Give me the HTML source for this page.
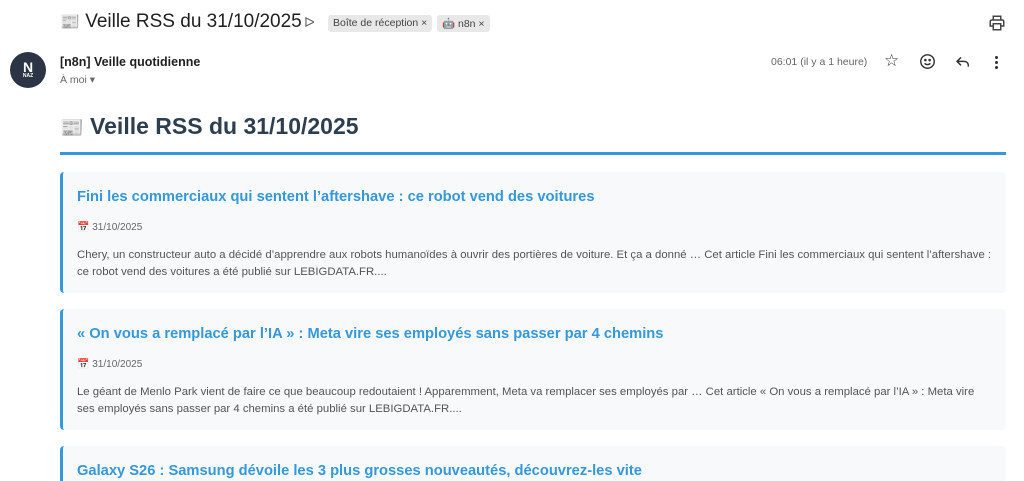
<!DOCTYPE html>
<html><head><meta charset="utf-8"><style>
*{margin:0;padding:0;box-sizing:border-box}
html,body{width:1024px;height:481px;overflow:hidden}
body{background:#fff;font-family:"Liberation Sans",Arial,sans-serif;position:relative}
.abs{position:absolute}
.subj{left:60px;top:11px;font-size:19px;color:#1f1f1f;white-space:nowrap}
.tag{top:15px;height:17px;background:#e8e8e8;border-radius:3px;font-size:10.5px;color:#444;padding:2px 5px;white-space:nowrap}
.card{position:absolute;left:60px;width:946px;height:121px;background:#f7f9fa;border-left:3px solid #3498db;border-radius:4px}
.card h2{position:absolute;left:14px;top:17px;font-size:14.7px;color:#3498db;font-weight:bold;white-space:nowrap}
.card .d{position:absolute;left:14px;top:50px;font-size:10px;color:#666}
.card p{position:absolute;left:14px;top:75px;width:930px;font-size:11.35px;color:#555;line-height:17px;white-space:nowrap}
</style></head><body>
<div class="abs subj"><span style="font-size:16px">📰</span> Veille RSS du 31/10/2025</div>
<div class="abs" style="left:304px;top:14px;font-size:14px;color:#666">ᐅ</div>
<div class="abs tag" style="left:328px">Boîte de réception ×</div>
<div class="abs tag" style="left:437px">🤖 n8n ×</div>
<svg class="abs" style="left:988px;top:14px" width="18" height="18" viewBox="0 0 24 24" fill="none" stroke="#444" stroke-width="2"><path d="M7 8V3h10v5M5 8h14a2 2 0 0 1 2 2v6h-4M7 16H3v-6a2 2 0 0 1 2-2M7 13h10v8H7z"/></svg>
<div class="abs" style="left:10px;top:52px;width:36px;height:36px;border-radius:50%;background:#2b3545;color:#fff;text-align:center;font-size:14px;font-weight:bold;line-height:30px">N<div style="font-size:5px;line-height:4px;margin-top:-8px">NAZ</div></div>
<div class="abs" style="left:60px;top:55px;font-size:12.5px;font-weight:bold;color:#1f1f1f">[n8n] Veille quotidienne</div>
<div class="abs" style="left:60px;top:74px;font-size:10.5px;color:#666">À moi ▾</div>
<div class="abs" style="left:771px;top:56px;font-size:10.5px;color:#666">06:01 (il y a 1 heure)</div>
<div class="abs" style="left:884px;top:51px;font-size:17px;color:#333">☆</div>
<svg class="abs" style="left:919px;top:53px" width="17" height="17" viewBox="0 0 24 24" fill="none" stroke="#333" stroke-width="2"><circle cx="12" cy="12" r="9.5"/><circle cx="9" cy="10" r=".8" fill="#333"/><circle cx="15" cy="10" r=".8" fill="#333"/><path d="M8 14.5c2 2.5 6 2.5 8 0"/></svg>
<svg class="abs" style="left:955px;top:54px" width="16" height="16" viewBox="0 0 24 24" fill="none" stroke="#333" stroke-width="2.2"><path d="M9 5 3 11l6 6M3 11h11a6 6 0 0 1 6 6v2"/></svg>
<div class="abs" style="left:995px;top:55px;width:3px;height:14px;background:radial-gradient(circle,#333 1.4px,transparent 1.6px) 0 0/3px 5px"></div>
<div class="abs" style="left:60px;top:113px;font-size:23px;font-weight:bold;color:#2c3e50;white-space:nowrap"><span style="font-size:19px">📰</span> Veille RSS du 31/10/2025</div>
<div class="abs" style="left:60px;top:152px;width:946px;height:3px;background:#3498db"></div>
<div class="card" style="top:172px"><h2>Fini les commerciaux qui sentent l’aftershave : ce robot vend des voitures</h2><div class="d">📅 31/10/2025</div><p>Chery, un constructeur auto a décidé d’apprendre aux robots humanoïdes à ouvrir des portières de voiture. Et ça a donné … Cet article Fini les commerciaux qui sentent l’aftershave :<br>ce robot vend des voitures a été publié sur LEBIGDATA.FR....</p></div>
<div class="card" style="top:309px"><h2>« On vous a remplacé par l’IA » : Meta vire ses employés sans passer par 4 chemins</h2><div class="d">📅 31/10/2025</div><p>Le géant de Menlo Park vient de faire ce que beaucoup redoutaient ! Apparemment, Meta va remplacer ses employés par … Cet article « On vous a remplacé par l’IA » : Meta vire<br>ses employés sans passer par 4 chemins a été publié sur LEBIGDATA.FR....</p></div>
<div class="card" style="top:446px;height:35px;border-radius:4px 4px 0 0"><h2>Galaxy S26 : Samsung dévoile les 3 plus grosses nouveautés, découvrez-les vite</h2></div>
</body></html>
